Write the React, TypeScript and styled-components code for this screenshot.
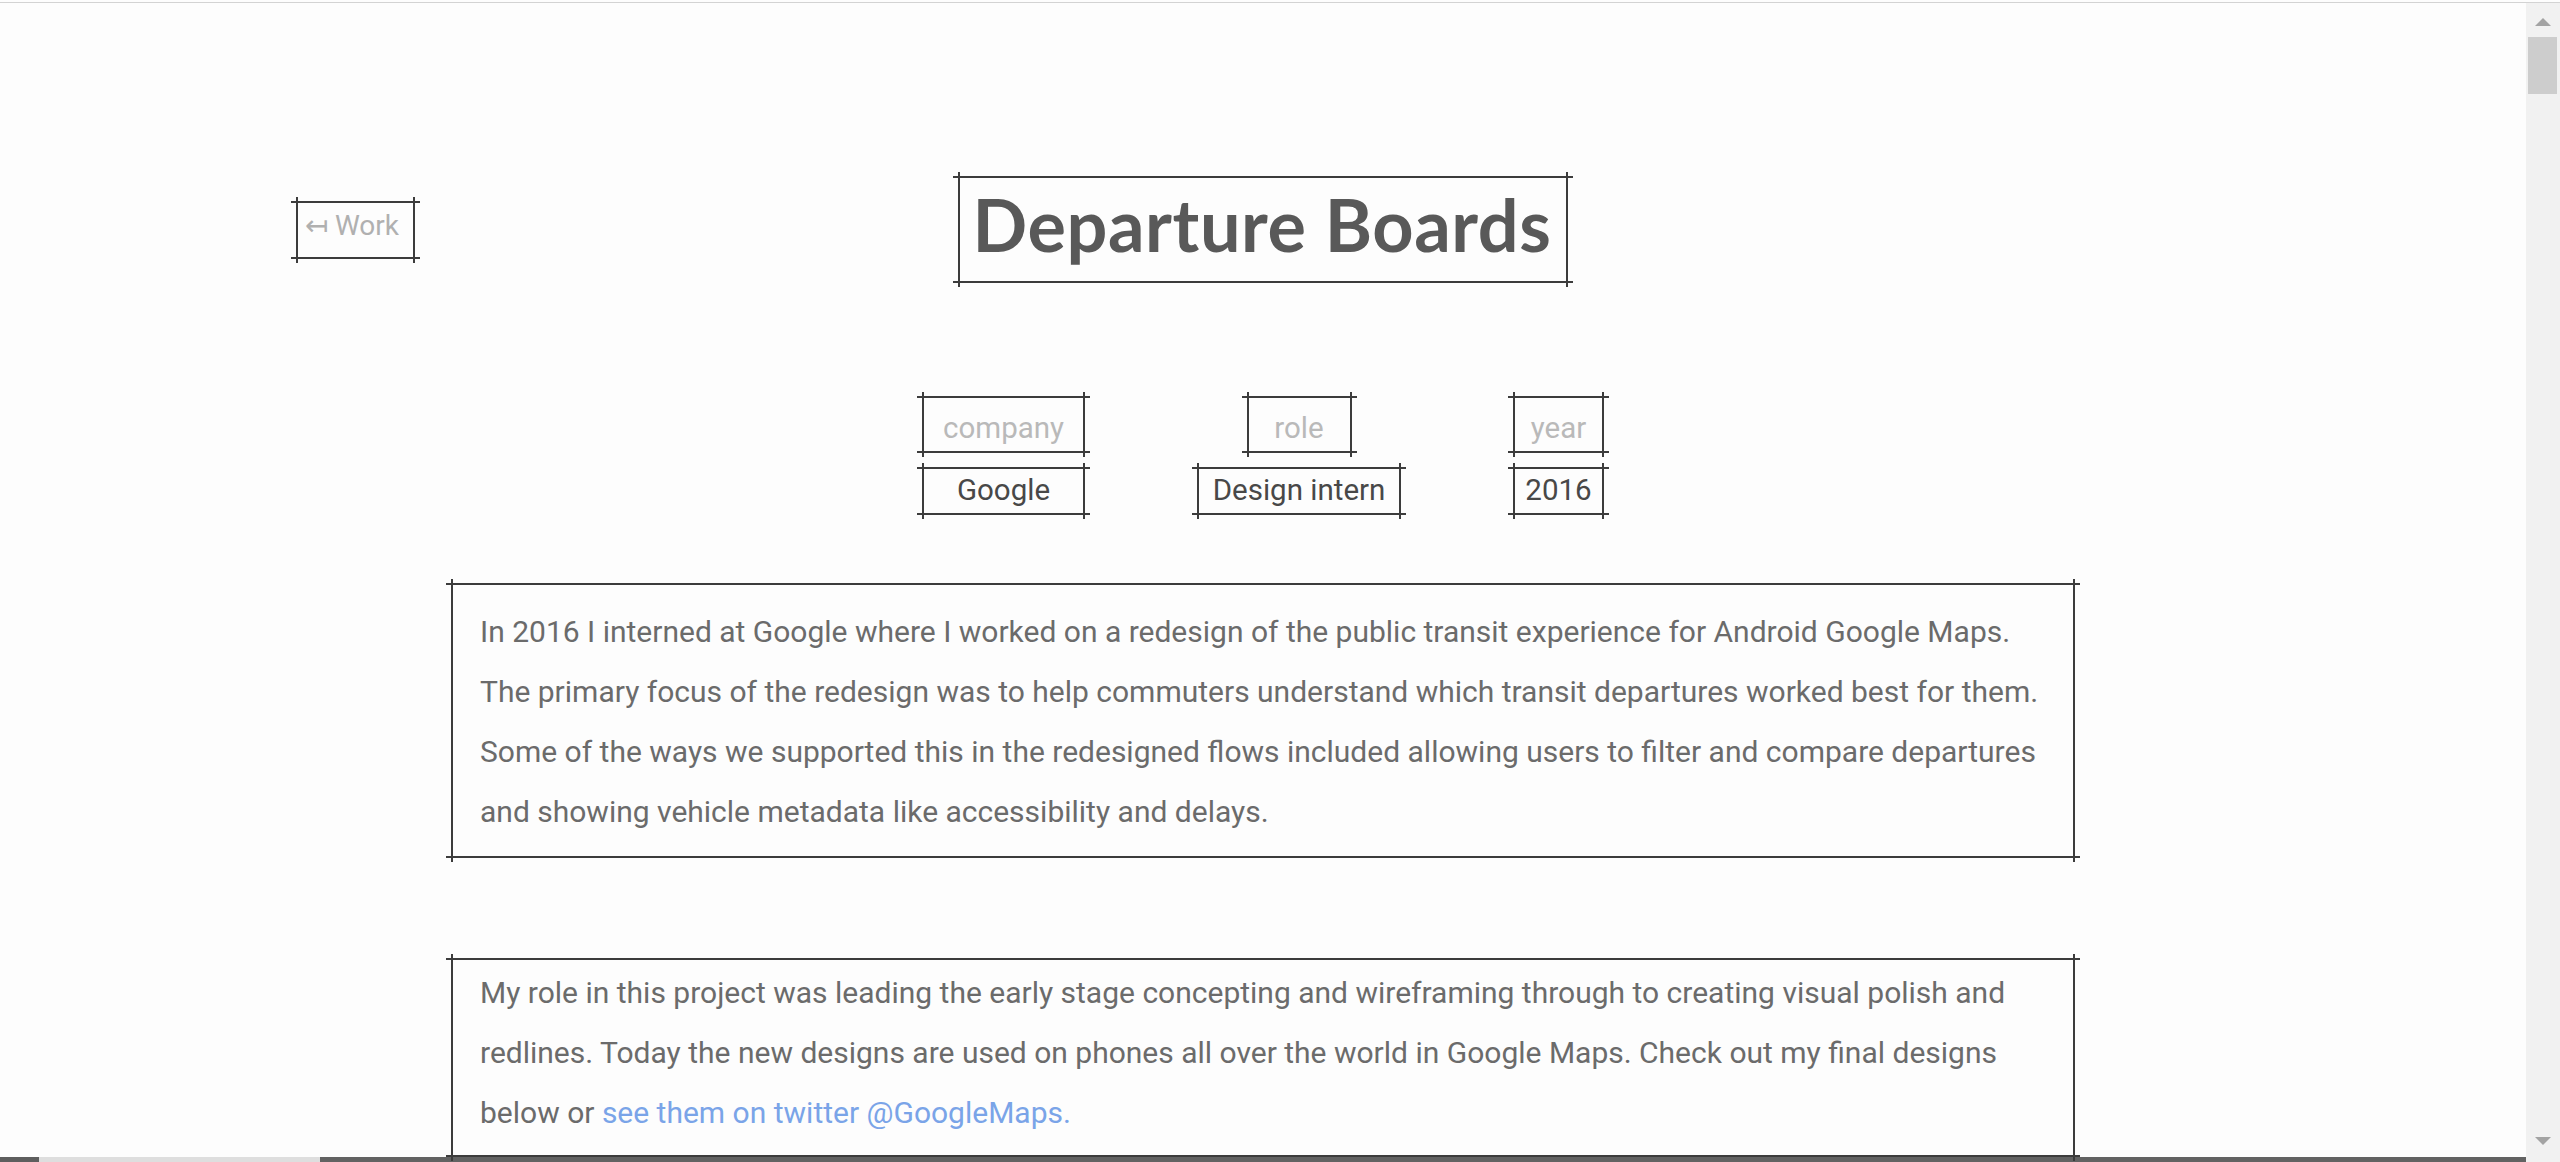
import styled, {createGlobalStyle} from "styled-components";

const GlobalStyle = createGlobalStyle`
    body {
        margin: 0;
        padding-top: 2px;
        background: #fdfdfd;
        font-family: Roboto, "Liberation Sans", sans-serif;
        overflow: hidden;
    }
`

const ink = "#3c3c3c";
const rail = "#f1f1f1";
const arrow = "#a3a3a3";

const Window = styled.div`
    display: flex;
    height: calc(100vh - 2px);
    box-sizing: border-box;
    border-top: 1px solid #d3d3d3;
`

const Viewport = styled.main`
    flex: 1;
    min-width: 0;
    overflow-y: auto;
`

// classic windows-style scrollbar on the right edge
const ScrollRail = styled.aside`
    width: 34px;
    flex-shrink: 0;
    display: flex;
    flex-direction: column;
    background: ${rail};
`

const ScrollButton = styled.div<{ $down?: boolean }>`
    height: 34px;
    flex-shrink: 0;
    display: flex;
    justify-content: center;
    align-items: flex-start;
    padding-top: ${p => (p.$down ? 9 : 15)}px;
    box-sizing: border-box;

    &::before {
        content: "";
        width: 0;
        height: 0;
        border-left: 8px solid transparent;
        border-right: 8px solid transparent;
        ${p => (p.$down ? `border-top: 8px solid ${arrow};` : `border-bottom: 8px solid ${arrow};`)}
    }
`

const ScrollThumb = styled.div`
    height: 57px;
    margin: 0 3px 0 2px;
    background: #cdcdcd;
`

const ScrollTrack = styled.div`
    flex: 1;
`

// box with hand-drawn looking lines: the strokes run a little past the corners
const SketchBox = styled.div`
    position: relative;
    box-sizing: border-box;

    &::before {
        content: "";
        position: absolute;
        top: -4px;
        bottom: -4px;
        left: 0;
        right: 0;
        border-left: 2px solid ${ink};
        border-right: 2px solid ${ink};
        pointer-events: none;
    }

    &::after {
        content: "";
        position: absolute;
        top: 0;
        bottom: 0;
        left: -5px;
        right: -5px;
        border-top: 2px solid ${ink};
        border-bottom: 2px solid ${ink};
        pointer-events: none;
    }
`

const Page = styled.div`
    padding-top: 173px;
`

const Header = styled.header`
    display: grid;
    grid-template-columns: 1fr auto 1fr;
    align-items: center;
    padding: 0 296px;
`

const BackLink = styled(SketchBox).attrs({as: "a"})`
    justify-self: start;
    display: block;
    padding: 8px 16px 16px 9px;
    font-size: 28px;
    line-height: 34px;
    color: #b0b0b0;
    text-decoration: none;
`

const Title = styled(SketchBox).attrs({as: "h1"})`
    margin: 0;
    padding: 6px 17px 17px 15px;
    font-family: Lato, "Open Sans", sans-serif;
    font-weight: 700;
    font-size: 72px;
    line-height: 84px;
    letter-spacing: 0.6px;
    color: #595959;
`

const MetaRow = styled.section`
    display: flex;
    justify-content: center;
    align-items: flex-start;
    gap: 112px;
    margin-top: 113px;
`

const MetaColumn = styled.div`
    display: flex;
    flex-direction: column;
    align-items: center;
    gap: 14px;
`

const MetaLabel = styled(SketchBox)<{ $width: number }>`
    width: ${p => p.$width}px;
    padding: 15px 0 8px;
    text-align: center;
    font-size: 29.5px;
    line-height: 34px;
    color: #b9b9b9;
`

const MetaValue = styled(SketchBox)<{ $width: number }>`
    width: ${p => p.$width}px;
    padding: 6px 0 8px;
    text-align: center;
    font-size: 29.5px;
    line-height: 34px;
    color: #484848;
`

const TextBox = styled(SketchBox)<{ $top: number; $bottom: number; $gap: number }>`
    width: 1624px;
    margin: ${p => p.$gap}px auto 0;
    padding: ${p => p.$top}px 28px ${p => p.$bottom}px 29px;
`

const Paragraph = styled.p`
    margin: 0;
    font-size: 30px;
    line-height: 60px;
    color: #6b6b6b;
`

const Link = styled.a`
    color: #7aa4e8;
    text-decoration: none;
`

const Showcase = styled.section`
    display: grid;
    grid-template-columns: 39px 281px 1fr;
    height: 21100px;
`

const ShowcasePanel = styled.div<{ $tone: string }>`
    background: ${p => p.$tone};
`

const meta = [
    {label: "company", value: "Google", labelWidth: 163, valueWidth: 163},
    {label: "role", value: "Design intern", labelWidth: 105, valueWidth: 204},
    {label: "year", value: "2016", labelWidth: 91, valueWidth: 91},
];

export default function App() {
    return (
        <>
            <GlobalStyle/>
            <Window>
                <Viewport>
                    <Page>
                        <Header>
                            <BackLink href="#">↤ Work</BackLink>
                            <Title>Departure Boards</Title>
                            <span/>
                        </Header>

                        <MetaRow>
                            {meta.map(m => (
                                <MetaColumn key={m.label}>
                                    <MetaLabel $width={m.labelWidth}>{m.label}</MetaLabel>
                                    <MetaValue $width={m.valueWidth}>{m.value}</MetaValue>
                                </MetaColumn>
                            ))}
                        </MetaRow>

                        <TextBox $gap={68} $top={19} $bottom={16}>
                            <Paragraph>
                                In 2016 I interned at Google where I worked on a redesign of the public transit
                                experience for Android Google Maps. The primary focus of the redesign was to help
                                commuters understand which transit departures worked best for them. Some of the ways we
                                supported this in the redesigned flows included allowing users to filter and compare
                                departures and showing vehicle metadata like accessibility and delays.
                            </Paragraph>
                        </TextBox>

                        <TextBox $gap={100} $top={5} $bottom={14}>
                            <Paragraph>
                                My role in this project was leading the early stage concepting and wireframing through
                                to creating visual polish and redlines. Today the new designs are used on phones all
                                over the world in Google Maps. Check out my final designs below or{" "}
                                <Link href="#">see them on twitter @GoogleMaps.</Link>
                            </Paragraph>
                        </TextBox>

                        <Showcase>
                            <ShowcasePanel $tone="#5e5e5e"/>
                            <ShowcasePanel $tone="#dedede"/>
                            <ShowcasePanel $tone="#626262"/>
                        </Showcase>
                    </Page>
                </Viewport>
                <ScrollRail aria-hidden>
                    <ScrollButton/>
                    <ScrollThumb/>
                    <ScrollTrack/>
                    <ScrollButton $down/>
                </ScrollRail>
            </Window>
        </>
    );
}
